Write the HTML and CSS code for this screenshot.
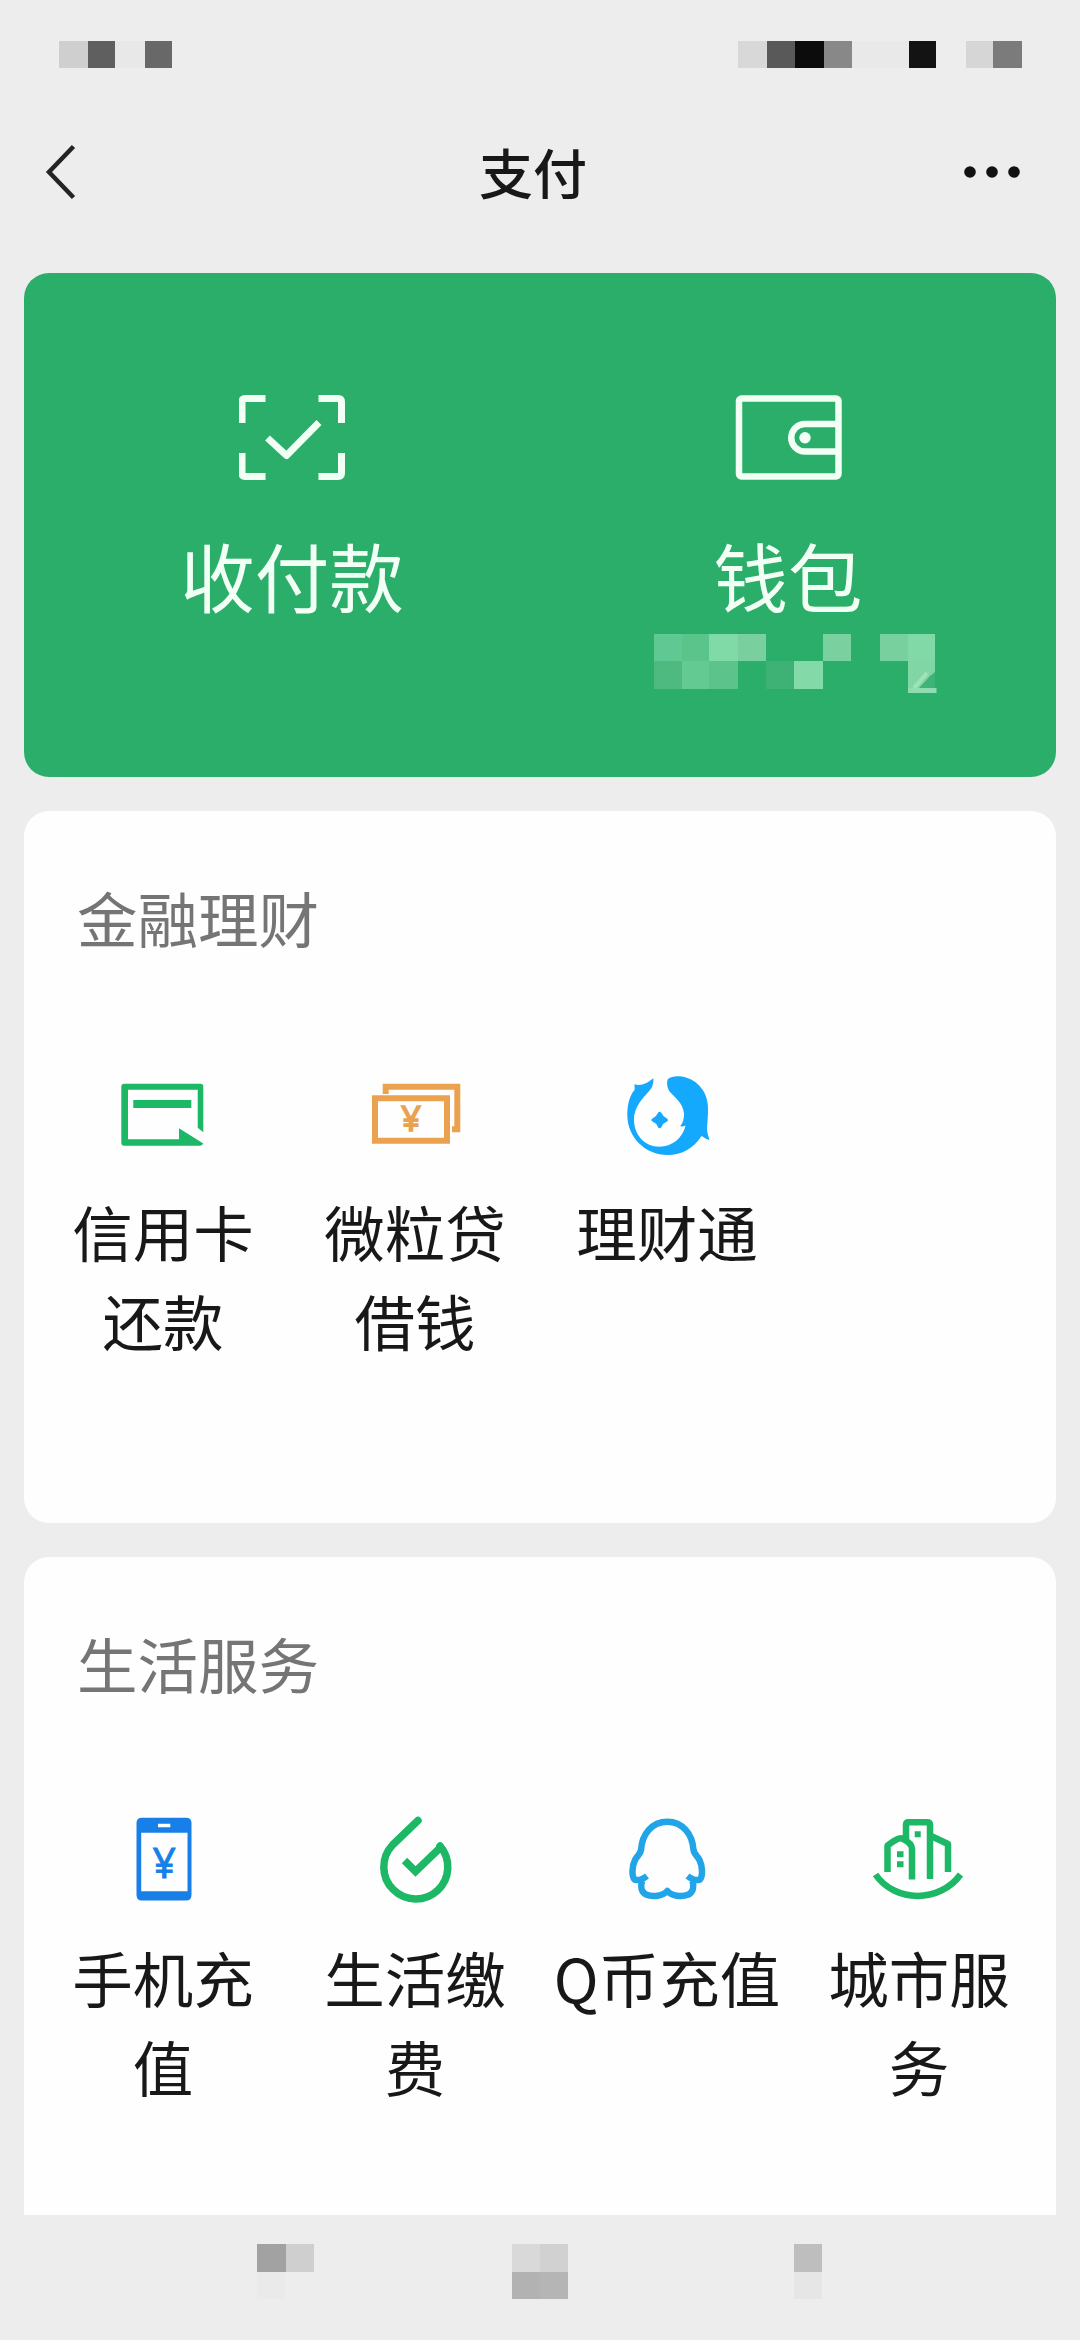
FILE: index.html
```html
<!DOCTYPE html>
<html lang="zh-CN">
<head>
<meta charset="utf-8">
<title>支付</title>
<link rel="stylesheet" href="styles.css">
</head>
<body>
<div class="screen">
  <div class="status">
    <svg width="113" height="27" viewBox="0 0 113 27" shape-rendering="crispEdges"><path fill="#cfcfcf" d="M0 0h29v27H0z"/><path fill="#5f5f5f" d="M29 0h27v27H29z"/><path fill="#e8e8e8" d="M56 0h30v27H56z"/><path fill="#686868" d="M86 0h27v27H86z"/></svg>
    <svg width="284" height="27" viewBox="0 0 284 27" shape-rendering="crispEdges"><path fill="#d8d8d8" d="M0 0h29v27H0z"/><path fill="#595959" d="M29 0h28v27H29z"/><path fill="#0c0c0c" d="M57 0h29v27H57z"/><path fill="#888" d="M86 0h28v27H86z"/><path fill="#e9e9e9" d="M114 0h57v27h-57z"/><path fill="#131313" d="M171 0h27v27h-27z"/><path fill="#d6d6d6" d="M228 0h27v27h-27z"/><path fill="#7b7b7b" d="M255 0h29v27h-29z"/></svg>
  </div>
  <header class="nav">
    <svg class="back" width="32" height="56" viewBox="0 0 32 56" fill="none" stroke="#242424" stroke-width="4.500"><path d="M28.500 2.500L4 28L28.500 53.500"/></svg>
    <h1 class="nav-title">支付</h1>
    <svg width="58" height="14" viewBox="0 0 58 14" fill="#111"><circle cx="7" cy="7" r="5.800"/><circle cx="29" cy="7" r="5.800"/><circle cx="51" cy="7" r="5.800"/></svg>
  </header>

  <main class="cards">
    <section class="pay">
      <div class="pay-item">
        <svg width="107" height="85" viewBox="0 0 107 85" fill="none" stroke="#f1fff5" stroke-width="7"><path d="M3 28V7Q3 3.500 6.500 3.500H26.500M79.500 3.500H99Q102.500 3.500 102.500 7V28M3 58V78Q3 81.500 6.500 81.500H26.500M79.500 81.500H99Q102.500 81.500 102.500 78V58"/><path stroke-linejoin="round" d="M28.500 43L47.500 60.500L80 27.500"/></svg>
        <span class="pay-label">收付款</span>
      </div>
      <div class="pay-item">
        <svg width="107" height="85" viewBox="0 0 107 85" fill="none" stroke="#f1fff5" stroke-width="6.500"><rect x="4" y="3.500" width="99.500" height="78" rx="2.500"/><path d="M103.500 29H70A13.700 13.700 0 0 0 70 56.500H103.500"/><circle cx="70" cy="42.700" r="5.700" fill="#f1fff5" stroke="none"/></svg>
        <span class="pay-label">钱包</span>
        <svg class="balance" width="284" height="60" viewBox="0 0 284 60">
          <g shape-rendering="crispEdges"><path fill="#60c892" d="M0 0h28v27H0z"/><path fill="#5ac48a" d="M28 0h27v27H28z"/><path fill="#80daa8" d="M55 0h29v27H55z"/><path fill="#79d09e" d="M84 0h28v27H84z"/><path fill="#7bd09f" d="M169 0h28v27h-28z"/><path fill="#77d09d" d="M226 0h28v27h-28z"/><path fill="#80d9a7" d="M254 0h27v27h-27z"/><path fill="#4fba80" d="M0 27h28v28H0z"/><path fill="#63ca91" d="M28 27h27v28H28z"/><path fill="#5cc48b" d="M55 27h29v28H55z"/><path fill="#3eb274" d="M112 27h28v28h-28z"/><path fill="#84d9a8" d="M140 27h29v28h-29z"/><path fill="#80d6a5" d="M254 27h27v28h-27z"/></g>
          <path fill="#3fb276" d="M281 38L276 42L265 54H281z"/><path fill="#90dcb2" d="M254 54h28.500v5H254z"/><path d="M260 54L273 39" stroke="#a0e1bc" stroke-width="4"/>
        </svg>
      </div>
    </section>

    <section class="card">
      <h2 class="card-title">金融理财</h2>
      <div class="grid">
        <div class="item">
          <svg class="icon" viewBox="0 0 90 90" fill="#1cb866"><path d="M85.300 62.300L79.700 57.700V19.700H10V69.300H61V58.300L85.300 73.500Q84 75.700 82 75.700H6.300Q3.300 75.700 3.300 72.700V16.700Q3.300 13.700 6.300 13.700H82.300Q85.300 13.700 85.300 16.700Z"/><path d="M15.300 30h58v8h-58z"/></svg>
          <span class="label">信用卡还款</span>
        </div>
        <div class="item">
          <svg class="icon" viewBox="0 0 90 90" fill="none" stroke="#eaa24f" stroke-width="6"><path d="M5 28.300H77V70.700H5zM15.700 24V16.700H87.300V59.300H82"/><text class="yen" x="41" y="61" font-size="35" fill="#eaa24f" stroke="#eaa24f" stroke-width="1.500">¥</text></svg>
          <span class="label">微粒贷借钱</span>
        </div>
        <div class="item">
          <svg class="icon" viewBox="0 0 90 90" fill="#14a9fc"><path d="M45.700 9.300C49 6.500 53 6 57 6.300C74 7.500 86 21 86 38C86 46 85.500 51 85 59C85 63 86.500 66 87.500 70C84 69.500 82 67 79.500 66C72 78 60 85 45.700 85C23 85 5.300 67 5.300 45C5.300 34 8 25 12.500 20C13 18 12.500 16 12.300 14.300C19 16.500 26 13 31.300 8.300C31.500 12 31.200 14 29.700 17.500C25 25 12 34 12 50C12 65 23 76.700 37.300 76.700C51 76.700 61 67 63.500 55.500C61.500 56.500 60 57 58.300 56C61 53 62 49 62 43.500C61 33 53 27.500 48 22C45 18 44.500 13 45.700 9.300Z"/><path d="M37.700 43.500Q39.500 48 44.200 50Q39.500 52 37.700 56.500Q35.900 52 31.200 50Q35.900 48 37.700 43.500Z" stroke="#14a9fc" stroke-width="3.500" stroke-linejoin="round"/></svg>
          <span class="label">理财通</span>
        </div>
      </div>
    </section>

    <section class="card card-last">
      <h2 class="card-title">生活服务</h2>
      <div class="grid">
        <div class="item">
          <svg class="icon" viewBox="0 0 90 90" fill="#187fe8"><path fill-rule="evenodd" d="M24 1.700H68Q73.500 1.700 73.500 7V79Q73.500 84.500 68 84.500H24Q18.500 84.500 18.500 79V7Q18.500 1.700 24 1.700ZM23.200 16.700V75.300H69.500V16.700ZM40 7.700V11.300H52.300V7.700Z"/><text class="yen" x="46.300" y="62" font-size="41" stroke="#187fe8" stroke-width="0.800">¥</text></svg>
          <span class="label">手机充值</span>
        </div>
        <div class="item">
          <svg class="icon" viewBox="0 0 90 90" fill="none" stroke="#1cb866" stroke-width="7.500"><path stroke-linecap="round" d="M48 4.500L22.500 29A32 32 0 1 0 70 30"/><path d="M73 29L45.500 55.500L34.500 44.500"/><path fill="#1cb866" stroke="none" d="M66 30L71 26L75 34L70 35Z"/></svg>
          <span class="label">生活缴费</span>
        </div>
        <div class="item">
          <svg class="icon" viewBox="0 0 90 90" fill="none" stroke="#22a5e8" stroke-width="6.500" stroke-linejoin="round"><path d="M25 60C21 63 16 65 12.500 63.500C9.500 60 10 50 13 44C15 40 18.500 38 19 34C20 18 30 5.700 45.300 5.700C60.500 5.700 70.500 18 71.500 34C72 38 75.500 40 77.500 44C80.500 50 81 60 78 63.500C74.500 65 69.500 63 65.500 60M20 65C18.500 70 19 76 24 78.500C31 81.500 41 80 45.300 75C49.500 80 59.500 81.500 66.500 78.500C71.500 76 72 70 70.500 65"/></svg>
          <span class="label">Q币充值</span>
        </div>
        <div class="item">
          <svg class="icon" viewBox="0 0 90 90" fill="none" stroke="#1cb866" stroke-width="6.500"><path d="M1.500 58.500C21 87 66 87 86.500 58.500"/><path stroke-linejoin="round" d="M32 26V9Q32 6.300 34.500 6.300H53Q56 6.300 56 9V63M13.500 56V29.500Q25 20.500 28 22.500Q38 27 38 33V63.500M57 20L74 28V56"/><path d="M40.700 18.300h6M23 38.300h6.500M23 48.300h6.500" stroke-width="6"/></svg>
          <span class="label">城市服务</span>
        </div>
      </div>
    </section>
  </main>

  <footer class="sysbar">
    <svg width="565" height="55" viewBox="0 0 565 55" shape-rendering="crispEdges"><path fill="#a2a2a2" d="M0 0h29v28H0z"/><path fill="#cfcfcf" d="M29 0h28v28H29z"/><path fill="#eaeaea" d="M0 28h29v27H0z"/><path fill="#d9d9d9" d="M255 0h28v28h-28z"/><path fill="#d1d1d1" d="M283 0h28v28h-28z"/><path fill="#b2b2b2" d="M255 28h28v27h-28z"/><path fill="#b5b5b5" d="M283 28h28v27h-28z"/><path fill="#bebebe" d="M537 0h28v28h-28z"/><path fill="#e6e6e6" d="M537 28h28v27h-28z"/></svg>
  </footer>
</div>
</body>
</html>
```
FILE: styles.css
```css
* { box-sizing: border-box; }

body {
  margin: 0;
  background: #ededed;
  color: #181818;
  font-family: "Noto Sans CJK SC", "Noto Sans", sans-serif;
}

svg { display: block; flex: none; }

.screen {
  display: flex;
  flex-direction: column;
  width: 1080px;
  height: 2340px;
  overflow: hidden;
}

.status {
  display: flex;
  justify-content: space-between;
  height: 112px;
  padding: 41px 58px 0 59px;
}

.nav {
  display: grid;
  grid-template-columns: 1fr auto 1fr;
  align-items: center;
  height: 120px;
  padding: 0 59px 0 45px;
}

.nav > :last-child { justify-self: end; }

.nav-title {
  margin: 0;
  font-size: 54px;
  line-height: 80px;
  font-weight: 500;
}

.cards {
  display: flex;
  flex-direction: column;
  gap: 34px;
  padding: 41px 24px 0;
}

.pay {
  display: grid;
  grid-template-columns: 1fr 1fr;
  height: 504px;
  padding: 122px 20px 0;
  border-radius: 25px;
  background: #2bae6a;
}

.pay-item {
  display: flex;
  flex-direction: column;
  align-items: center;
}

.pay-label {
  margin-top: 40px;
  color: #f1fff5;
  font-size: 74.5px;
  line-height: 110px;
}

.balance { margin-top: 4px; margin-left: 15px; }

.card {
  height: 712px;
  padding: 61px 11px 0 13px;
  border-radius: 25px;
  background: #fefefe;
}

.card-last {
  height: 658px;
  border-radius: 25px 25px 0 0;
}

.card-title {
  margin: 0 0 0 40px;
  color: #757575;
  font-size: 60.5px;
  line-height: 90px;
  font-weight: 400;
}

.grid {
  display: grid;
  grid-template-columns: repeat(4, 252px);
  margin-top: 108px;
}

.item {
  display: flex;
  flex-direction: column;
  align-items: center;
}

.icon {
  width: 90px;
  height: 90px;
  overflow: visible;
}

.yen {
  font-family: "Noto Sans", sans-serif;
  text-anchor: middle;
}

.label {
  width: 232px;
  margin-top: 26px;
  font-size: 60.5px;
  line-height: 89px;
  text-align: center;
}

.sysbar {
  display: flex;
  padding: 29px 0 0 257px;
}
```
